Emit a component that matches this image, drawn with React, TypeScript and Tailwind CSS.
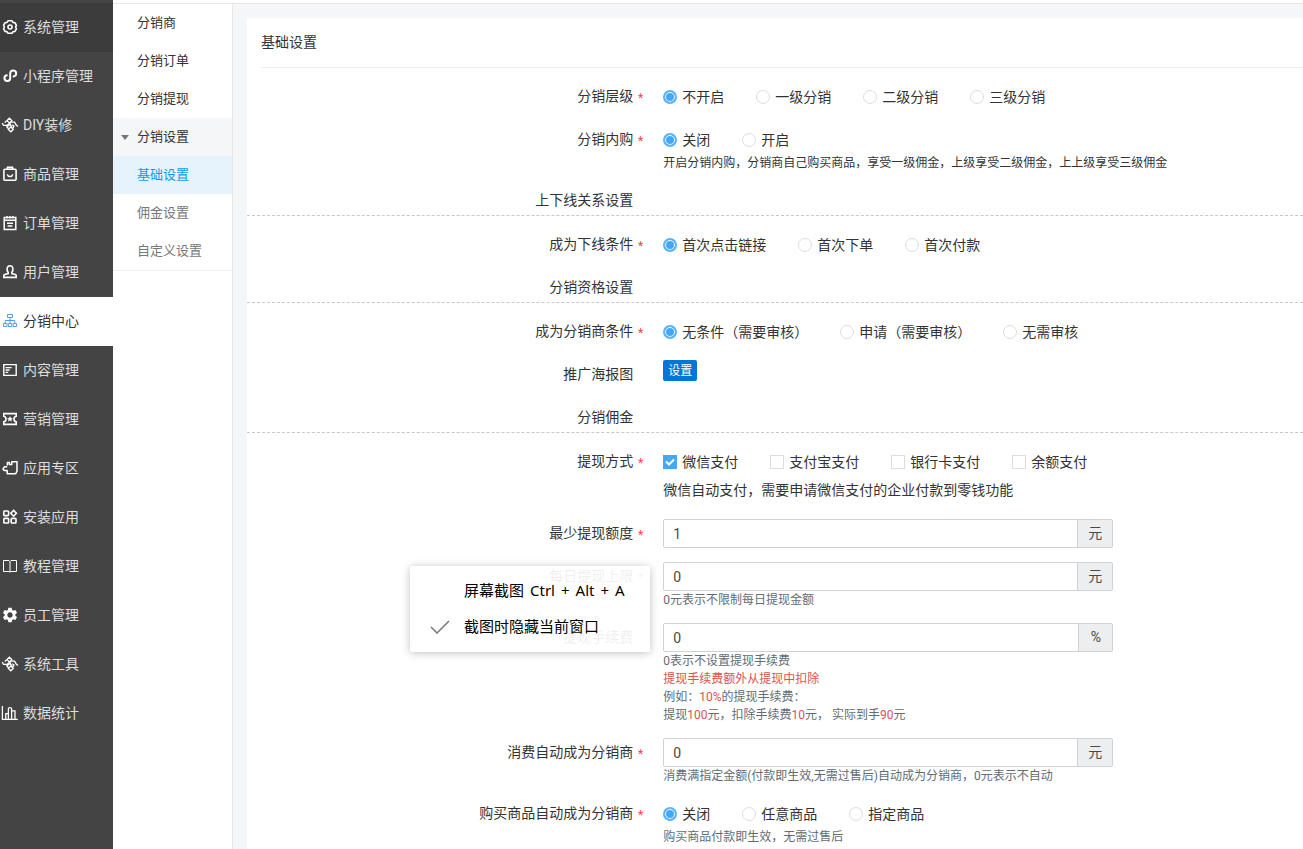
import { useState } from 'react';
import type { ReactNode } from 'react';
import { MdSettings } from 'react-icons/md';

function Glyph({ children, width = 1.4 }: { children: ReactNode; width?: number }) {
  return (
    <svg
      viewBox="0 0 14 14"
      className="w-[14px] h-[14px] shrink-0 overflow-visible"
      fill="none"
      stroke="currentColor"
      strokeWidth={width}
      aria-hidden="true"
    >
      {children}
    </svg>
  );
}

const knot = (
  <Glyph width={1.3}>
    <path d="M6.4.2l2.4 2.4L6.4 5 4 2.6zM7.8 9l2.4 2.4-2.4 2.4-2.4-2.4z" />
    <path d="M-.8 5.2l1.4 2.2h3.2L8 4.2M1.8 4.4l1.8-1.6M5.8 11l-2-2.2 3.6-2.4L9 9.8M8.2 4.2h3.4l1.6 2.8 1.8 1.4M9.2 6.8l1.8 1.4-1.2 2.2" />
  </Glyph>
);

const menu: { label: string; icon: ReactNode }[] = [
  {
    label: '系统管理',
    icon: (
      <Glyph width={1.6}>
        <path d="M5 .8h4l1 1.6 2 .3 1.4 2.6L12.6 7l.8 1.8-1.4 2.6-2 .3-1 1.6H5l-1-1.6-2-.3L.6 8.8 1.4 7 .6 5.2 2 2.7l2-.3z" strokeLinejoin="round" />
        <circle cx="7" cy="7" r="2" />
      </Glyph>
    ),
  },
  {
    label: '小程序管理',
    icon: (
      <Glyph width={2}>
        <path d="M3.8 6.3a2.9 2.9 0 1 0 3.4 2.9V4.3a3 3 0 1 1 3.4 3.1" strokeLinecap="round" />
      </Glyph>
    ),
  },
  { label: 'DIY装修', icon: knot },
  {
    label: '商品管理',
    icon: (
      <Glyph width={1.6}>
        <rect x=".9" y="2.2" width="12.2" height="11" rx="1" />
        <path d="M4.5 2V.4h5V2M4.2 7.4c.8 2.8 4.8 2.8 5.6 0" />
      </Glyph>
    ),
  },
  {
    label: '订单管理',
    icon: (
      <Glyph width={1.5}>
        <path d="M1.2 1.6h11.6v11.8H1.2zM1.4 4.2h11.2M4 0v2.6M7 0v2.6M10 0v2.6M4 7.2h6M4.6 10h4.8" />
      </Glyph>
    ),
  },
  {
    label: '用户管理',
    icon: (
      <Glyph width={1.6}>
        <path d="M5.2 7.4C3.2 5 3.8.8 7 .8s3.8 4.2 1.8 6.6v1.2l3.6.8c.6.2.8.6.8 1.2v1.8H.8v-1.8c0-.6.2-1 .8-1.2l3.6-.8z" />
      </Glyph>
    ),
  },
  {
    label: '分销中心',
    icon: (
      <Glyph width={1}>
        <path d="M4.5.5h5v3h-5zM.5 9.5h3.4v3H.5zM5.3 9.5h3.4v3H5.3zM10.1 9.5h3.4v3h-3.4zM7 3.5v6M2.2 9.5v-3h9.6v3" />
      </Glyph>
    ),
  },
  {
    label: '内容管理',
    icon: (
      <Glyph>
        <path d="M.8 1.6h12.4v10.8H.8zM2.6 4.6h6M2.6 7h4M2.6 9.4h2.6" />
      </Glyph>
    ),
  },
  {
    label: '营销管理',
    icon: (
      <Glyph width={1.6}>
        <path d="M.8 1.6h12.4v2.6c-3 .6-3 5 0 5.6v2.6H.8V9.8c3-.6 3-5 0-5.6z" />
        <path d="M7 4l.9 2 2 .2-1.5 1.4.5 2L7 8.6l-1.9 1 .5-2-1.5-1.4 2-.2z" fill="currentColor" stroke="none" />
      </Glyph>
    ),
  },
  {
    label: '应用专区',
    icon: (
      <Glyph width={1.5}>
        <path d="M4.4 4.6V1.4h2v2.2h2.4V.8H14v9.4L12.6 12.8H4.2V9.6H1.4L0 8.2l1.4-2.4h2.8" strokeLinejoin="round" />
      </Glyph>
    ),
  },
  {
    label: '安装应用',
    icon: (
      <Glyph width={1.6}>
        <rect x=".8" y="1" width="4.8" height="4.6" rx=".8" />
        <rect x=".8" y="8.4" width="4.8" height="4.6" rx=".8" />
        <rect x="8.2" y="8.4" width="4.8" height="4.6" rx=".8" />
        <path d="M10.6.4l2.8 2.9-2.8 2.9-2.8-2.9z" />
      </Glyph>
    ),
  },
  {
    label: '教程管理',
    icon: (
      <Glyph width={1}>
        <path d="M.5 1.5H6l1 1 1-1h5.5v11H8l-1 .6-1-.6H.5zM7 2.5v10.4" />
      </Glyph>
    ),
  },
  { label: '员工管理', icon: <MdSettings className="w-[18px] h-[18px] -mx-[2px] shrink-0" /> },
  { label: '系统工具', icon: knot },
  {
    label: '数据统计',
    icon: (
      <Glyph width={1.3}>
        <path d="M-.6 0v13.4h15.4M2.8 13V7.6h2.6M5.4 13V2.6c0-1.2 3.2-1.2 3.2 0V13M8.6 4.8H12V13" />
      </Glyph>
    ),
  },
];

const subMenu = ['分销商', '分销订单', '分销提现'];

function Row({
  label,
  required,
  htmlFor,
  divider,
  children,
}: {
  label: string;
  required?: boolean;
  htmlFor?: string;
  divider?: boolean;
  children?: ReactNode;
}) {
  return (
    <div className={divider ? 'mb-[14px] border-b border-dashed border-[#c8c8c8]' : 'mb-[14px]'}>
      <div className="grid grid-cols-[38fr_62fr]">
        <div className="flex h-[29px] justify-end pr-[5px] leading-[29px]">
          <label htmlFor={htmlFor}>{label}</label>
          <span className="w-[10px] pt-[2px] text-right text-xs leading-[29px] text-[#ff4544]">
            {required && '*'}
          </span>
        </div>
        <div className="pl-[15px]">{children}</div>
      </div>
    </div>
  );
}

function Choices({ name, type = 'radio', options }: { name: string; type?: 'radio' | 'checkbox'; options: string[] }) {
  return (
    <div className="flex h-[29px] items-center gap-8">
      {options.map((option, i) => (
        <label key={option} className="flex items-center gap-[5px] whitespace-nowrap">
          {type === 'radio' ? (
            <input
              type="radio"
              name={name}
              defaultChecked={i === 0}
              className="w-[14px] h-[14px] appearance-none rounded-full border border-[#dddddd] bg-white checked:border-2 checked:border-[#5cb3f9] checked:bg-[#44a8f7] checked:shadow-[inset_0_0_0_1px_#ffffff]"
            />
          ) : (
            <span className="relative flex">
              <input
                type="checkbox"
                name={name}
                defaultChecked={i === 0}
                className="peer w-[14px] h-[14px] appearance-none border border-[#dddddd] bg-white checked:border-[#44a8f7] checked:bg-[#44a8f7]"
              />
              <svg
                viewBox="0 0 14 14"
                className="pointer-events-none absolute inset-0 hidden peer-checked:block"
                fill="none"
                stroke="#ffffff"
                strokeWidth="2"
              >
                <path d="M3 6.5l3 3 5-5" />
              </svg>
            </span>
          )}
          {option}
        </label>
      ))}
    </div>
  );
}

function AmountInput({ id, initial, unit }: { id: string; initial: string; unit: string }) {
  const [value, setValue] = useState(initial);

  return (
    <div className="flex h-[29px] max-w-[450px] overflow-hidden rounded-[2px] border border-[#cfd1d3] text-[#464a4c]">
      <input
        id={id}
        type="text"
        value={value}
        onChange={(e) => setValue(e.target.value)}
        className="min-w-0 flex-1 bg-white px-[9px] outline-none"
      />
      <span className="min-w-[34px] border-l border-[#cfd1d3] bg-[#eceeef] px-[10px] text-center leading-[27px]">
        {unit}
      </span>
    </div>
  );
}

function Help({ children }: { children: ReactNode }) {
  return <p className="text-xs leading-[18px] text-[#636c72]">{children}</p>;
}

function Red({ children }: { children: ReactNode }) {
  return <span className="text-[#d9534f]">{children}</span>;
}

function CaptureMenu() {
  return (
    <div className="absolute left-[410px] top-[566px] w-[240px] rounded-[3px] bg-white/92 py-[7px] font-['Noto_Sans','Noto_Sans_CJK_SC',sans-serif] text-[15px] text-black shadow-[0_1px_8px_rgba(0,0,0,0.25)]">
      <button type="button" className="flex h-9 w-full items-center gap-[6px] pl-[54px]">
        <span>屏幕截图</span>
        <span>Ctrl</span>
        <span>+</span>
        <span>Alt</span>
        <span>+</span>
        <span>A</span>
      </button>
      <button type="button" className="flex h-9 w-full items-center pl-5 text-left">
        <svg viewBox="0 0 20 14" className="mr-[14px] w-5 h-[14px]" fill="none" stroke="#777777" strokeWidth="1.5">
          <path d="M1 7l6 6L19 1" />
        </svg>
        截图时隐藏当前窗口
      </button>
    </div>
  );
}

export default function App() {
  return (
    <div className="relative flex min-h-screen bg-white font-[Roboto,'Noto_Sans_CJK_SC',sans-serif] text-sm text-[#333333]">
      <nav className="w-[113px] shrink-0 bg-[#444444] pt-[3px] text-[#dddddd]">
        {menu.map(({ label, icon }, i) => {
          const active = label === '分销中心';
          return (
            <a
              key={label}
              href="#"
              className={
                'flex h-[49px] items-center gap-[6px] pb-[2px] pl-[3px] whitespace-nowrap ' +
                (active ? 'bg-white text-[#333333]' : i === 0 ? 'bg-[#3c3c3c]' : '')
              }
            >
              <span className={active ? 'text-[#5a9cec]' : 'text-white'}>{icon}</span>
              {label}
            </a>
          );
        })}
      </nav>

      <div className="flex min-w-0 flex-1 flex-col pt-[3px]">
        <div className="flex flex-1 border-t border-[#e7e7e7]">
          <nav className="w-[120px] shrink-0 border-r border-[#e7e7e7] text-[13px] leading-[38px]">
            {subMenu.map((label) => (
              <a key={label} href="#" className="block pl-6">
                {label}
              </a>
            ))}
            <button type="button" className="flex w-full items-center bg-[#f5f6f8] pl-2">
              <svg viewBox="0 0 8 5" className="mr-2 w-2 h-[5px]" fill="#777777" aria-hidden="true">
                <path d="M0 0h8L4 5z" />
              </svg>
              分销设置
            </button>
            <div className="border-b border-[#eeeeee] text-[#777777]">
              <a href="#" className="block bg-[#e6f2fc] pl-6 text-[#0f9af0]">
                基础设置
              </a>
              <a href="#" className="block pl-6">
                佣金设置
              </a>
              <a href="#" className="block pl-6">
                自定义设置
              </a>
            </div>
          </nav>

          <main className="min-w-0 flex-1 bg-[#f5f6f8] pl-[14px] pt-[14px]">
            <form className="h-full bg-white">
              <h1 className="mb-[14px] ml-[14px] border-b border-[#eeeeee] leading-[49px]">基础设置</h1>

              <Row label="分销层级" required>
                <Choices name="level" options={['不开启', '一级分销', '二级分销', '三级分销']} />
              </Row>
              <Row label="分销内购" required>
                <Choices name="rebate" options={['关闭', '开启']} />
                <p className="text-xs leading-[18px]">
                  开启分销内购，分销商自己购买商品，享受一级佣金，上级享受二级佣金，上上级享受三级佣金
                </p>
              </Row>
              <Row label="上下线关系设置" divider />
              <Row label="成为下线条件" required>
                <Choices name="condition" options={['首次点击链接', '首次下单', '首次付款']} />
              </Row>
              <Row label="分销资格设置" divider />
              <Row label="成为分销商条件" required>
                <Choices name="shareCondition" options={['无条件（需要审核）', '申请（需要审核）', '无需审核']} />
              </Row>
              <Row label="推广海报图">
                <button type="button" className="block h-[21px] rounded-[2px] bg-[#0275d8] px-[5px] text-xs text-white">
                  设置
                </button>
              </Row>
              <Row label="分销佣金" divider />
              <Row label="提现方式" required>
                <Choices
                  name="payType"
                  type="checkbox"
                  options={['微信支付', '支付宝支付', '银行卡支付', '余额支付']}
                />
                <p className="leading-[29px]">微信自动支付，需要申请微信支付的企业付款到零钱功能</p>
              </Row>
              <Row label="最少提现额度" required htmlFor="minMoney">
                <AmountInput id="minMoney" initial="1" unit="元" />
              </Row>
              <Row label="每日提现上限" required htmlFor="dayLimit">
                <AmountInput id="dayLimit" initial="0" unit="元" />
                <Help>0元表示不限制每日提现金额</Help>
              </Row>
              <Row label="提现手续费" htmlFor="charge">
                <AmountInput id="charge" initial="0" unit="%" />
                <Help>0表示不设置提现手续费</Help>
                <Help>
                  <Red>提现手续费额外从提现中扣除</Red>
                </Help>
                <Help>
                  例如：<Red>10%</Red>的提现手续费：
                </Help>
                <Help>
                  提现<Red>100</Red>元，扣除手续费<Red>10</Red>元， 实际到手<Red>90</Red>元
                </Help>
              </Row>
              <Row label="消费自动成为分销商" required htmlFor="autoShare">
                <AmountInput id="autoShare" initial="0" unit="元" />
                <Help>消费满指定金额(付款即生效,无需过售后)自动成为分销商，0元表示不自动</Help>
              </Row>
              <Row label="购买商品自动成为分销商" required>
                <Choices name="goodsShare" options={['关闭', '任意商品', '指定商品']} />
                <Help>购买商品付款即生效，无需过售后</Help>
              </Row>
            </form>
          </main>
        </div>
      </div>

      <CaptureMenu />
    </div>
  );
}
